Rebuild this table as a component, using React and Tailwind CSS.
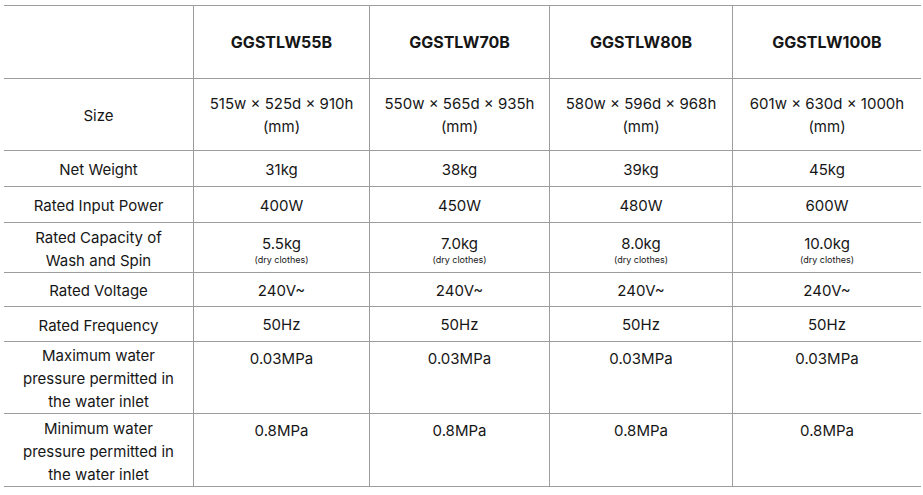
import React from "react";

const models = ["GGSTLW55B", "GGSTLW70B", "GGSTLW80B", "GGSTLW100B"];

const rows = [
  { label: ["Size"], values: ["515w × 525d × 910h", "550w × 565d × 935h", "580w × 596d × 968h", "601w × 630d × 1000h"], sub: "(mm)" },
  { label: ["Net Weight"], values: ["31kg", "38kg", "39kg", "45kg"] },
  { label: ["Rated Input Power"], values: ["400W", "450W", "480W", "600W"] },
  { label: ["Rated Capacity of", "Wash and Spin"], values: ["5.5kg", "7.0kg", "8.0kg", "10.0kg"], small: "(dry clothes)" },
  { label: ["Rated Voltage"], values: ["240V~", "240V~", "240V~", "240V~"] },
  { label: ["Rated Frequency"], values: ["50Hz", "50Hz", "50Hz", "50Hz"] },
  { label: ["Maximum water", "pressure permitted in", "the water inlet"], values: ["0.03MPa", "0.03MPa", "0.03MPa", "0.03MPa"], top: true },
  { label: ["Minimum water", "pressure permitted in", "the water inlet"], values: ["0.8MPa", "0.8MPa", "0.8MPa", "0.8MPa"], top: true },
];

const App = () => {
  return (
    <div className="w-[923px] h-[495px] bg-white pt-[5px] pl-[4px] text-[#161616]" style={{ fontFamily: "Inter, 'Noto Sans', sans-serif" }}>
      <div className="grid w-[917px] grid-cols-[189px_176px_180px_183px_189px] grid-rows-[73px_72px_36px_36px_50px_34px_35px_72px_73px] border-t border-[#9d9d9d] text-[15px] leading-[23px]">
        {/* header */}
        <div className="border-b border-[#9d9d9d]" />
        {models.map((m) => (
          <div key={m} className="flex items-center justify-center border-b border-l border-[#9d9d9d] text-[16px] font-bold">
            {m}
          </div>
        ))}

        {rows.map((r, i) => (
          <React.Fragment key={i}>
            <div className="flex flex-col items-center justify-center border-b border-[#9d9d9d] pt-[2px] text-center">
              {r.label.map((l) => (
                <span key={l}>{l}</span>
              ))}
            </div>
            {r.values.map((v, j) => (
              <div
                key={j}
                className={`flex flex-col items-center border-b border-l border-[#9d9d9d] text-center ${r.top ? "justify-start pt-[5px]" : "justify-center pt-[1px]"}`}
              >
                <span>{v}</span>
                {r.sub && <span>{r.sub}</span>}
                {r.small && <span className="text-[9px] leading-[10px]">{r.small}</span>}
              </div>
            ))}
          </React.Fragment>
        ))}
      </div>
    </div>
  );
};

export default App;
